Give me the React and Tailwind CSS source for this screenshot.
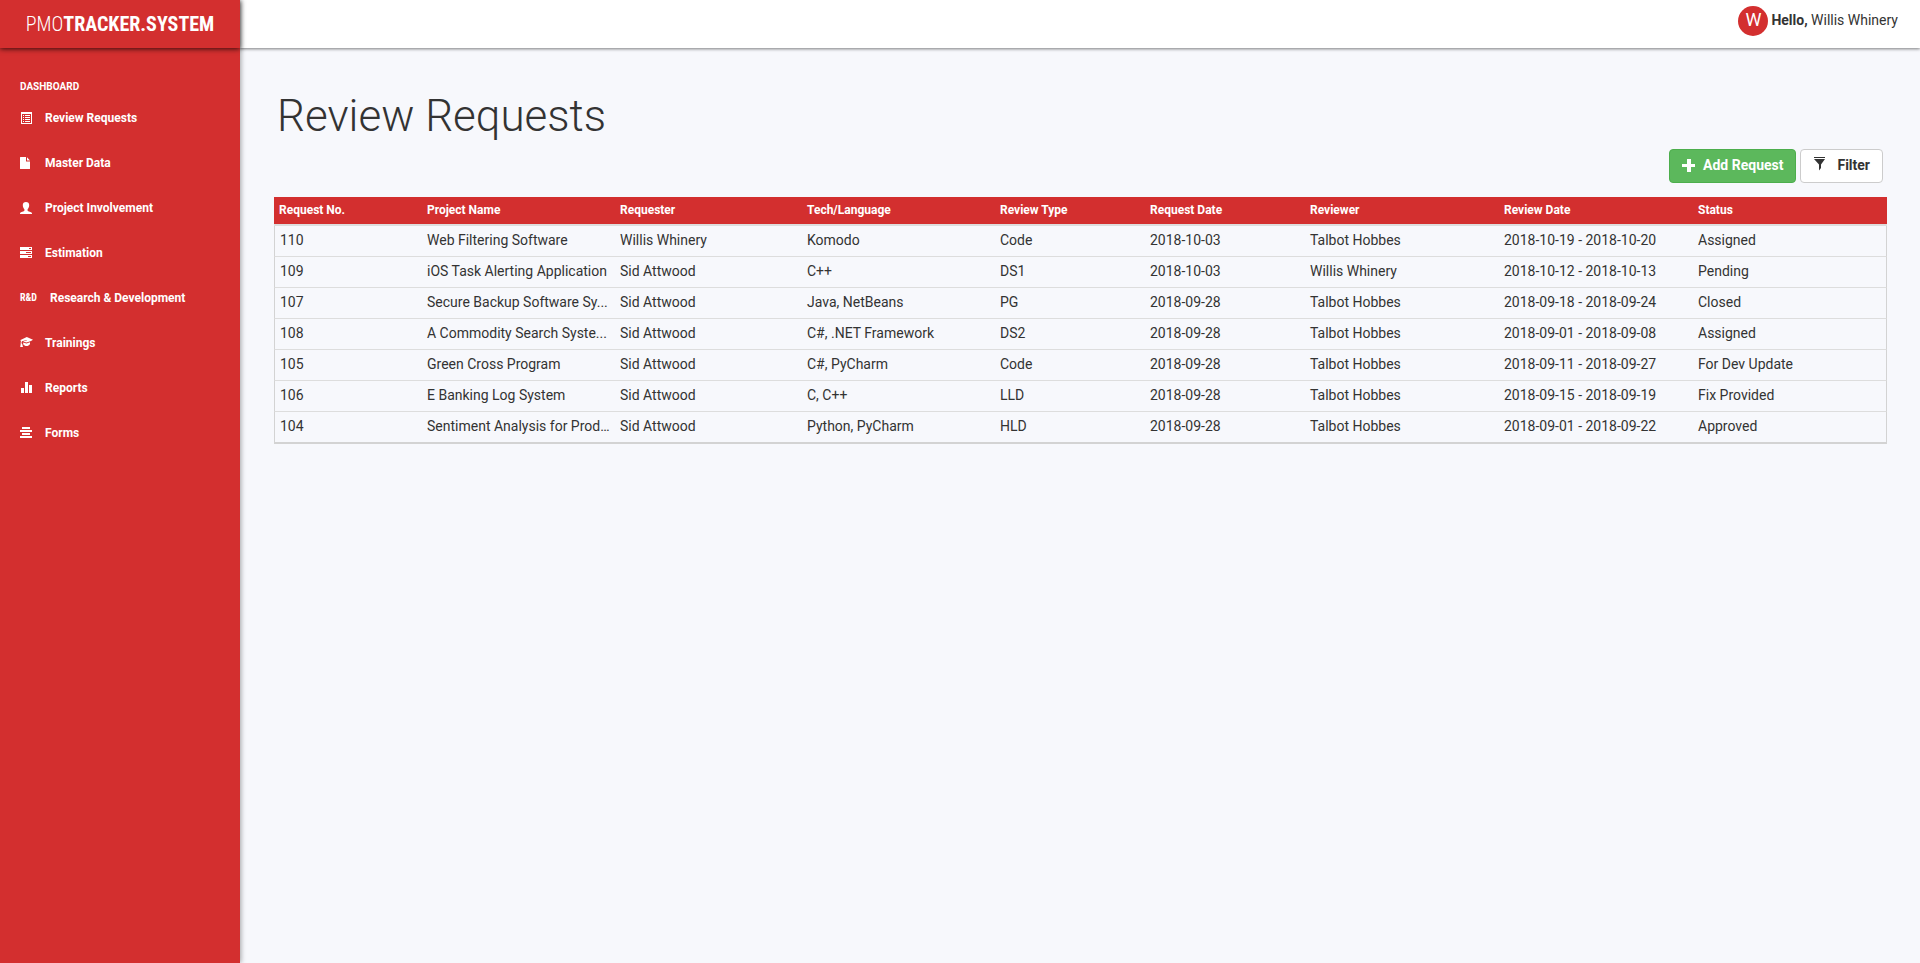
const icons = {
  list: (
    <>
      <path fillRule="evenodd" d="M1 0h11v12H1zM2 2v9h9V2z" />
      <path d="M3 3h1v1H3zM5 3h5v1H5zM3 5h1v1H3zM5 5h5v1H5zM3 7h1v1H3zM5 7h5v1H5zM3 9h1v1H3zM5 9h5v1H5z" />
    </>
  ),
  file: <path d="M.5 0H6v4.500h4V11.500a.5.5 0 0 1-.5.500H.5a.5.5 0 0 1-.5-.5V.5A.5.5 0 0 1 .5 0zM7 .2L10 3.500H7z" />,
  user: (
    <path d="M6 0C8 0 9.200 1.200 9.200 3c0 2-.8 3.500-1.600 4.300v1.200c0 .4.300.6.700.8l2.700.9c.6.2 1 .6 1 1.200V12H0v-.6c0-.6.400-1 1-1.200l2.700-.9c.4-.2.700-.4.700-.8V7.300C3.600 6.500 2.800 5 2.800 3 2.800 1.200 4 0 6 0z" />
  ),
  tasks: (
    <path
      fillRule="evenodd"
      d="M0 0h12v3H0zM9 1v1h2V1zM0 4h12v3H0zM6 5v1h5V5zM0 8h12v3H0zM8 9v1h3V9z"
    />
  ),
  cap: (
    <path d="M6.800 0L13 2.800 11 3.900 6.500 5.600 3 4.400 6.800 3.400 6.700 3 2 4.200c-.4.400-.5 1.300-.5 2L2.200 7 3 10H.2L.7 7V6.200C.7 5 .8 4.200 1.100 3.700L0 3.200zM3.200 5.400L6.500 6.600 10 5.300V7C9 8.500 8 9 6.600 9 5.200 9 4 8.400 3.200 7.200z" />
  ),
  stats: <path d="M1 6h3v5H1zM5 0h3v11H5zM9 3h3v8H9z" />,
  center: <path d="M2 0h8v2H2zM0 3h12v2H0zM2 6h8v2H2zM0 9h12v2H0z" />,
};

const menu = [
  { icon: "list", label: "Review Requests" },
  { icon: "file", label: "Master Data" },
  { icon: "user", label: "Project Involvement" },
  { icon: "tasks", label: "Estimation" },
  { label: "Research & Development" },
  { icon: "cap", label: "Trainings" },
  { icon: "stats", label: "Reports" },
  { icon: "center", label: "Forms" },
];

const columns = [
  ["Request No.", "w-[148px]"],
  ["Project Name", "w-[193px]"],
  ["Requester", "w-[187px]"],
  ["Tech/Language", "w-[193px]"],
  ["Review Type", "w-[150px]"],
  ["Request Date", "w-[160px]"],
  ["Reviewer", "w-[194px]"],
  ["Review Date", "w-[194px]"],
  ["Status", "w-[194px]"],
];

const rows = [
  ["110", "Web Filtering Software", "Willis Whinery", "Komodo", "Code", "2018-10-03", "Talbot Hobbes", "2018-10-19 - 2018-10-20", "Assigned"],
  ["109", "iOS Task Alerting Application", "Sid Attwood", "C++", "DS1", "2018-10-03", "Willis Whinery", "2018-10-12 - 2018-10-13", "Pending"],
  ["107", "Secure Backup Software Sy...", "Sid Attwood", "Java, NetBeans", "PG", "2018-09-28", "Talbot Hobbes", "2018-09-18 - 2018-09-24", "Closed"],
  ["108", "A Commodity Search Syste...", "Sid Attwood", "C#, .NET Framework", "DS2", "2018-09-28", "Talbot Hobbes", "2018-09-01 - 2018-09-08", "Assigned"],
  ["105", "Green Cross Program", "Sid Attwood", "C#, PyCharm", "Code", "2018-09-28", "Talbot Hobbes", "2018-09-11 - 2018-09-27", "For Dev Update"],
  ["106", "E Banking Log System", "Sid Attwood", "C, C++", "LLD", "2018-09-28", "Talbot Hobbes", "2018-09-15 - 2018-09-19", "Fix Provided"],
  ["104", "Sentiment Analysis for Prod...", "Sid Attwood", "Python, PyCharm", "HLD", "2018-09-28", "Talbot Hobbes", "2018-09-01 - 2018-09-22", "Approved"],
];

function Sidebar() {
  return (
    <aside className="z-10 w-60 shrink-0 bg-[#d32f2f] text-white shadow-[1px_0_5px_rgba(0,0,0,0.35)]">
      <div className="flex h-12 items-center justify-center shadow-[0_1px_5px_rgba(0,0,0,0.75)]">
        <a href="#home" className="font-['Roboto_Condensed','Roboto',sans-serif] text-xl font-light">
          PMO<strong className="font-bold">TRACKER.SYSTEM</strong>
        </a>
      </div>
      <nav className="px-5 pt-[33px]">
        <h2 className="text-[10px] leading-3 font-bold">DASHBOARD</h2>
        <ul className="mt-[7px]">
          {menu.map(({ icon, label }) => (
            <li key={label} className="h-[45px] pt-2">
              <a href="#page" className="flex items-center text-xs leading-5 font-bold">
                {icon ? (
                  <svg viewBox="0 0 13 12" width="13" height="12" fill="currentColor" className="mr-3 shrink-0" aria-hidden="true">
                    {icons[icon]}
                  </svg>
                ) : (
                  <span className="mr-[13px] font-['Roboto_Condensed','Roboto',sans-serif] text-[10px]">R&amp;D</span>
                )}
                {label}
              </a>
            </li>
          ))}
        </ul>
      </nav>
    </aside>
  );
}

export default function App() {
  return (
    <div className="flex min-h-screen bg-[#f7f8fc] font-['Roboto',sans-serif] text-sm text-[#333]">
      <Sidebar />
      <div className="min-w-0 flex-1">
        <header className="flex h-12 items-start justify-end gap-[3px] bg-white pt-[6px] pr-[22px] shadow-[0_1px_3px_rgba(0,0,0,0.5)]">
          <span className="flex size-[30px] items-center justify-center rounded-full bg-[#d32f2f] pb-[3px] text-lg leading-5 text-white">W</span>
          <span className="leading-7">
            <strong className="font-bold">Hello,</strong> Willis Whinery
          </span>
        </header>
        <main className="pr-[33px] pl-[34px]">
          <h1 className="pt-[43px] pl-[3px] text-[44px] leading-[50px] font-light">Review Requests</h1>
          <div className="mt-2 flex justify-end gap-1 pr-1">
            <button className="flex h-[34px] items-center gap-2 rounded border border-[#4cae4c] bg-[#5cb85c] px-3 pb-[2px] font-bold text-white">
              <svg viewBox="0 0 13 13" width="13" height="13" fill="currentColor" aria-hidden="true">
                <path d="M5 0h4v5h4v3H9v5H5V8H0V5h5z" />
              </svg>
              Add Request
            </button>
            <button className="flex h-[34px] items-center gap-[11px] rounded border border-[#ccc] bg-white px-3 pb-[2px] font-bold">
              <svg viewBox="0 0 13 16" width="13" height="16" fill="currentColor" aria-hidden="true">
                <path d="M1 0h11v1H1zM1 2h11L8 7.500V11L6 13.500V7.500z" />
              </svg>
              Filter
            </button>
          </div>
          <table className="mt-[14px] w-full table-fixed border-separate border-spacing-0 text-left">
            <colgroup>
              {columns.map(([name, width]) => (
                <col key={name} className={width} />
              ))}
            </colgroup>
            <thead className="bg-[#d32f2f] text-xs text-white">
              <tr>
                {columns.map(([name]) => (
                  <th key={name} className="h-[29px] border-b-2 border-[#ddd] bg-clip-padding px-[5px] pb-[2px] font-bold">
                    {name}
                  </th>
                ))}
              </tr>
            </thead>
            <tbody className="[&>tr:last-child>td]:h-8 [&>tr:last-child>td]:border-b-2 [&>tr:last-child>td]:border-b-[#d3d3d3]">
              {rows.map((row) => (
                <tr key={row[0]}>
                  {row.map((cell, i) => (
                    <td
                      key={i}
                      className="h-[31px] truncate border-b border-[#ddd] px-[5px] pb-[2px] first:border-l first:border-l-[#d3d3d3] last:border-r last:border-r-[#d3d3d3]"
                    >
                      {cell}
                    </td>
                  ))}
                </tr>
              ))}
            </tbody>
          </table>
        </main>
      </div>
    </div>
  );
}
